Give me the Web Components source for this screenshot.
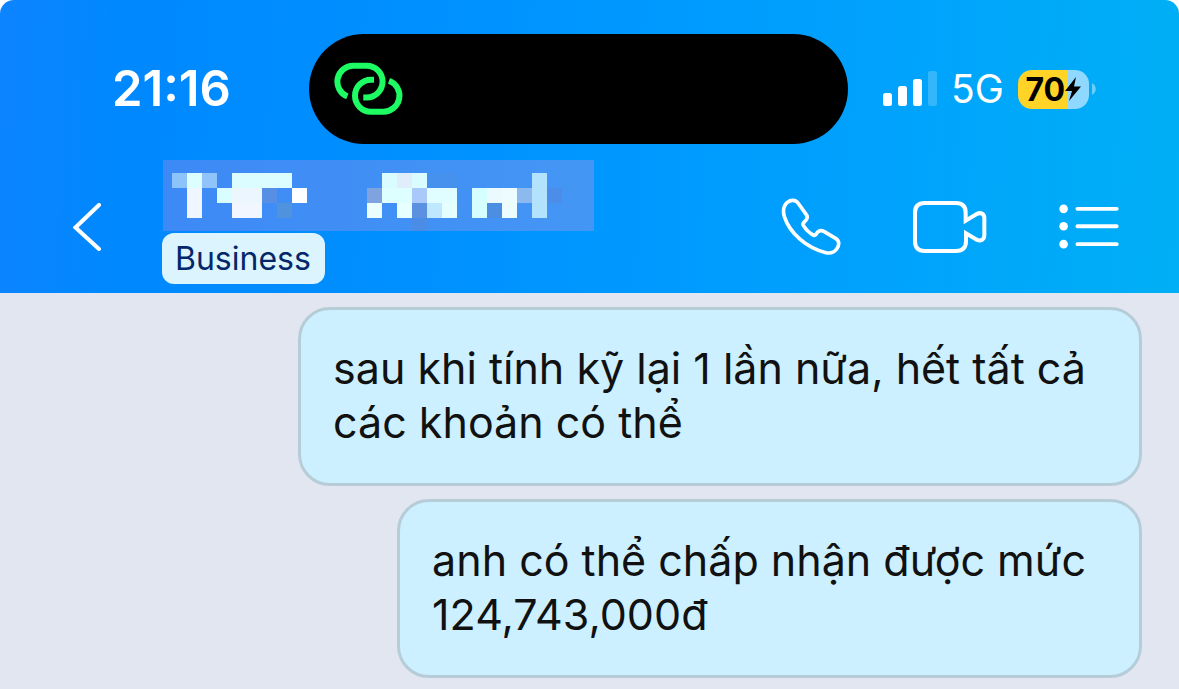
<!DOCTYPE html>
<html lang="vi">
<head>
<meta charset="utf-8">
<meta name="viewport" content="width=device-width, initial-scale=1">
<title>Chat</title>
<style>
	body {
		margin: 0;
		min-height: 100vh;
		background: #fff;
		font-family: Inter, "Noto Sans", sans-serif;
	}
</style>
</head>
<body>
<chat-screen>
	<chat-top slot="top">
		<status-bar slot="status" time="21:16" network="5G" battery="70"></status-bar>
		<chat-header slot="header" badge="Business"></chat-header>
	</chat-top>
	<chat-bubble>sau khi tính kỹ lại 1 lần nữa, hết tất cả<br>các khoản có thể</chat-bubble>
	<chat-bubble>anh có thể chấp nhận được mức<br>124,743,000đ</chat-bubble>
</chat-screen>

<script>
class ChatScreen extends HTMLElement {
	connectedCallback() {
		this.attachShadow({ mode: "open" });
		this.shadowRoot.innerHTML = `
			<style>
				:host { display: flex; flex-direction: column; min-height: 100vh; }
				main {
					flex: 1;
					display: flex;
					flex-direction: column;
					align-items: flex-end;
					gap: 13px;
					box-sizing: border-box;
					padding: 14px 37px 12px;
					background: #e1e6f0;
				}
			</style>
			<slot name="top"></slot>
			<main><slot></slot></main>
		`;
	}
}

class ChatTop extends HTMLElement {
	connectedCallback() {
		this.attachShadow({ mode: "open" });
		this.shadowRoot.innerHTML = `
			<style>
				:host {
					display: block;
					color: #fff;
					border-radius: 14px 14px 0 0;
					background: linear-gradient(92deg, #0d84ff 0%, #0088ff 10%, #0090ff 35%, #0099ff 55%, #00a4fc 78%, #00aff5 100%);
				}
			</style>
			<slot name="status"></slot>
			<slot name="header"></slot>
		`;
	}
}

class StatusBar extends HTMLElement {
	connectedCallback() {
		this.attachShadow({ mode: "open" });
		this.render();
	}
	render() {
		this.shadowRoot.innerHTML = `
			<style>
				:host {
					display: grid;
					grid-template-columns: 309fr 539fr 331fr;
					align-items: center;
					padding: 34px 0 16px;
				}
				time {
					padding-left: 112px;
					font-size: 49px;
					font-weight: 600;
					line-height: 56px;
				}
				.island {
					display: flex;
					align-items: center;
					height: 110px;
					box-sizing: border-box;
					padding-left: 25px;
					border-radius: 55px;
					background: #000;
				}
				.right { display: flex; align-items: center; padding-left: 34px; }
				.network { margin: 0 14px; font-size: 39px; font-weight: 400; line-height: 40px; }
				.battery {
					display: flex;
					align-items: center;
					justify-content: center;
					width: 71px;
					height: 39px;
					border-radius: 14px;
					color: #000;
					background: linear-gradient(90deg, #ffd426 70%, #8fd8ff 70%);
					font-size: 32px;
					font-weight: 700;
				}
				svg { display: block; flex: none; }
				.tip { margin-left: 2px; }
			</style>
			<time>${this.getAttribute("time")}</time>
			<div class="island">
				<svg width="70" height="54" viewBox="14 12 70 54" fill="none" stroke="#1dfc62" stroke-width="6">
					<path d="M27.3 46.5A16 16 0 0 1 33.3 15.7H46.7A15.9 15.9 0 0 1 46.7 47.5H43.3"/>
					<path d="M54 29.7H51A16 16 0 0 0 51 61.7H63A16 16 0 0 0 69 30.7"/>
				</svg>
			</div>
			<div class="right">
				<svg width="55" height="36" viewBox="0 0 55 36" fill="#fff">
					<rect x="1" y="22" width="9" height="13" rx="2.5"/>
					<rect x="16" y="15" width="9" height="20" rx="2.5"/>
					<rect x="31" y="8" width="9" height="27" rx="2.5"/>
					<rect x="46" y="0" width="9" height="35" rx="2.5" opacity=".2"/>
				</svg>
				<span class="network">${this.getAttribute("network")}</span>
				<span class="battery">
					${this.getAttribute("battery")}
					<svg width="16" height="24" viewBox="0 0 16 24"><path d="M11 0 0 14H7L4 24 16 9.500H9Z"/></svg>
				</span>
				<svg class="tip" width="5" height="12" viewBox="0 0 5 12"><path d="M1 0C6 3 6 9 1 12Z" fill="#6dccfa"/></svg>
			</div>
		`;
	}
}

class ChatHeader extends HTMLElement {
	connectedCallback() {
		this.attachShadow({ mode: "open" });
		this.render();
	}
	render() {
		this.shadowRoot.innerHTML = `
			<style>
				:host {
					display: flex;
					align-items: center;
					padding: 0 60px 0 73px;
				}
				.contact {
					flex: 1;
					display: flex;
					flex-direction: column;
					align-items: flex-start;
					gap: 2px;
					margin-left: 61px;
					padding-bottom: 9px;
				}
				.badge {
					padding: 0 14px 0 13px;
					border-radius: 12px;
					background: #dcf4fd;
					color: #04266b;
					font-size: 32px;
					line-height: 51px;
				}
				nav { display: flex; align-items: center; gap: 72px; }
			</style>
			<icon-button label="Quay lại">
				<svg width="28" height="48" viewBox="0 0 28 48" fill="none" stroke="#fff" stroke-width="4" stroke-linecap="round"><path d="M26 2 2.500 24.500 26 46"/></svg>
			</icon-button>
			<div class="contact">
				<pixel-name></pixel-name>
				<span class="badge">${this.getAttribute("badge")}</span>
			</div>
			<nav>
				<icon-button label="Gọi thoại">
					<svg width="60" height="58" viewBox="63 54 180 174" fill="none" stroke="#fff" stroke-width="11" stroke-linejoin="round"><path d="M82 67C92 59 107 59 114 69L139 104C145 112 141 119 133 126Q127 131 130 136C138 149 150 160 160 165Q166 168 169 161C175 152 184 150 193 155L228 176C239 183 238 196 230 207C221 219 211 221 198 218C140 205 89 159 73 110C69 95 70 77 82 67Z"/></svg>
				</icon-button>
				<icon-button label="Gọi video">
					<svg width="74" height="54" viewBox="459 60 222 162" fill="none" stroke="#fff" stroke-width="12"><path d="M617 122V98Q617 69 588 69H494Q465 69 465 98V184Q465 213 494 213H588Q618 213 618 184V160L650 179C663 185 673 178 673 166V114C673 101 662 96 650 102Z"/></svg>
				</icon-button>
				<icon-button label="Tùy chọn">
					<svg width="60" height="45" viewBox="897 73 182 135" fill="#fff"><g><circle cx="911" cy="87" r="13"/><circle cx="911" cy="140" r="13"/><circle cx="911" cy="194" r="13"/></g><path d="M953 87H1072M953 140H1072M953 194H1072" stroke="#fff" stroke-width="12" stroke-linecap="round"/></svg>
				</icon-button>
			</nav>
		`;
	}
}

class IconButton extends HTMLElement {
	connectedCallback() {
		this.attachShadow({ mode: "open" });
		this.shadowRoot.innerHTML = `
			<style>
				:host { display: block; }
				button { display: block; margin: 0; padding: 0; border: 0; background: none; cursor: pointer; }
				::slotted(svg) { display: block; }
			</style>
			<button type="button" aria-label="${this.getAttribute("label")}"><slot></slot></button>
		`;
	}
}

// contact name hidden behind 15px blocks: [column, row, columns, rows, colour]
const blocks = [
	[0, 0, 1, 1, "#8dc3fb"], [1, 0, 1, 1, "#ddfeff"], [2, 0, 1, 1, "#8fc3f9"], [4, 0, 4, 1, "#dcfdff"],
	[1, 1, 1, 2, "#eff6ff"], [3, 1, 1, 1, "#d9feff"], [4, 1, 2, 1, "#ebf6ff"], [4, 2, 2, 1, "#f2f7ff"],
	[6, 1, 1, 1, "#568fe3"], [8, 1, 1, 1, "#fcfeff"], [7, 2, 1, 1, "#4f93df"],
	[14, 0, 3, 1, "#d8fcff"], [15, 0, 1, 1, "#e0edfa"], [13, 1, 1, 1, "#7ea3df"], [14, 1, 2, 1, "#deffff"],
	[16, 1, 1, 1, "#a9c9fa"], [17, 1, 2, 1, "#e0feff"], [13, 2, 1, 1, "#eafdff"], [15, 2, 1, 1, "#e8ffff"],
	[16, 2, 1, 1, "#5a92e1"], [17, 2, 1, 1, "#bfe7fd"], [18, 2, 1, 1, "#e5ffff"], [16, 3, 1, 1, "#4a8ce6"],
	[20, 1, 1, 2, "#d5ffff"], [21, 1, 1, 1, "#eafaff"], [22, 1, 1, 2, "#edfcff"], [21, 2, 1, 1, "#4b8ee2"],
	[23, 1, 1, 1, "#8cb9ee"], [24, 0, 1, 3, "#b3e2fd"], [25, 1, 1, 1, "#4b8de8"], [17, 0, 2, 1, "#4690ee"]
];

class PixelName extends HTMLElement {
	connectedCallback() {
		this.attachShadow({ mode: "open" });
		const rects = blocks.map(([x, y, w, h, fill]) =>
			`<rect x="${10 + x * 15}" y="${13 + y * 15}" width="${w * 15}" height="${h * 15}" fill="${fill}"/>`
		).join("");
		this.shadowRoot.innerHTML = `
			<style>
				:host { display: block; }
				svg { display: block; }
			</style>
			<svg width="432" height="71" viewBox="0 0 432 71" shape-rendering="crispEdges" aria-hidden="true">
				<defs><linearGradient id="veil"><stop offset="0" stop-color="#3d89f6"/><stop offset="1" stop-color="#4496f4"/></linearGradient></defs>
				<rect x="1" width="431" height="71" fill="url(#veil)"/>
				${rects}
			</svg>
		`;
	}
}

class ChatBubble extends HTMLElement {
	connectedCallback() {
		this.attachShadow({ mode: "open" });
		this.shadowRoot.innerHTML = `
			<style>
				:host {
					display: block;
					box-sizing: border-box;
					padding: 31px 53px 34px 32px;
					border: 3px solid #b6cdd8;
					border-radius: 32px;
					background: #ccf0ff;
					color: #111;
					font-size: 43px;
					line-height: 54px;
				}
			</style>
			<slot></slot>
		`;
	}
}

customElements.define("icon-button", IconButton);
customElements.define("pixel-name", PixelName);
customElements.define("status-bar", StatusBar);
customElements.define("chat-header", ChatHeader);
customElements.define("chat-top", ChatTop);
customElements.define("chat-bubble", ChatBubble);
customElements.define("chat-screen", ChatScreen);
</script>
</body>
</html>
